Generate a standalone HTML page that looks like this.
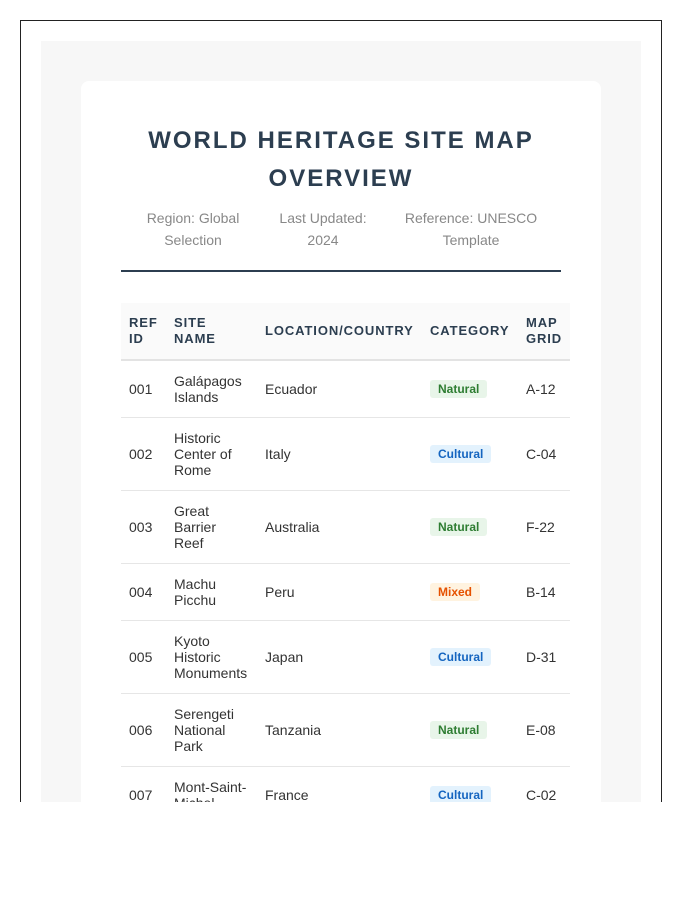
<!DOCTYPE html>
<html><head><meta charset="utf-8"><style>
*{box-sizing:border-box;margin:0;padding:0}
body{width:700px;height:900px;background:#fff;font-family:"Liberation Sans",Arial,sans-serif;position:relative;overflow:hidden}
.outer{position:absolute;left:20px;top:20px;width:642px;height:782px;border:1px solid #222;border-bottom:none;overflow:hidden;padding:20px}
.gray{background:#f7f7f7;padding:40px;height:1200px}
.card{background:#fff;border-radius:8px;padding:40px;height:1200px}
h1{font-size:24px;line-height:38px;letter-spacing:2px;color:#2c3e50;text-align:center;font-weight:bold;margin-top:1px}
.meta{position:relative;height:50px;margin-top:13px;color:#888;font-size:14px;line-height:22px;text-align:center}
.meta div{position:absolute;top:-4px}
.rule{height:2px;background:#2c3e50;margin-top:9px}
table{border-collapse:collapse;margin-top:31px;width:449px;table-layout:fixed;font-size:14px;color:#333}
th{background:#fafafa;text-align:left;font-size:13px;line-height:16px;color:#2c3e50;letter-spacing:.9px;padding:12px 8px;border-bottom:2px solid #e3e3e3;text-transform:uppercase}
td{padding:12px 8px;line-height:16px;border-bottom:1px solid #e6e6e6;vertical-align:middle}
.b{display:inline-block;font-size:12px;font-weight:bold;padding:1px 8px;border-radius:3px;line-height:16px}
.n{background:#e8f5e9;color:#2e7d32}.c{background:#e3f2fd;color:#1565c0}.m{background:#fff3e0;color:#e65100}
</style></head><body>
<div class="outer"><div class="gray"><div class="card">
<h1>WORLD HERITAGE SITE MAP OVERVIEW</h1>
<div class="meta">
<div style="left:20px;width:104px">Region: Global Selection</div>
<div style="left:152px;width:100px">Last Updated: 2024</div>
<div style="left:280px;width:140px">Reference: UNESCO Template</div>
</div>
<div class="rule"></div>
<table>
<colgroup><col style="width:45px"><col style="width:91px"><col style="width:165px"><col style="width:96px"><col style="width:52px"></colgroup>
<tr><th>Ref ID</th><th>Site Name</th><th>Location/Country</th><th>Category</th><th>Map Grid</th></tr>
<tr><td>001</td><td>Galápagos Islands</td><td>Ecuador</td><td><span class="b n">Natural</span></td><td>A-12</td></tr>
<tr><td>002</td><td>Historic Center of Rome</td><td>Italy</td><td><span class="b c">Cultural</span></td><td>C-04</td></tr>
<tr><td>003</td><td>Great Barrier Reef</td><td>Australia</td><td><span class="b n">Natural</span></td><td>F-22</td></tr>
<tr><td>004</td><td>Machu Picchu</td><td>Peru</td><td><span class="b m">Mixed</span></td><td>B-14</td></tr>
<tr><td>005</td><td>Kyoto Historic Monuments</td><td>Japan</td><td><span class="b c">Cultural</span></td><td>D-31</td></tr>
<tr><td>006</td><td>Serengeti National Park</td><td>Tanzania</td><td><span class="b n">Natural</span></td><td>E-08</td></tr>
<tr><td>007</td><td>Mont-Saint-Michel</td><td>France</td><td><span class="b c">Cultural</span></td><td>C-02</td></tr>
</table>
</div></div></div>
</body></html>
